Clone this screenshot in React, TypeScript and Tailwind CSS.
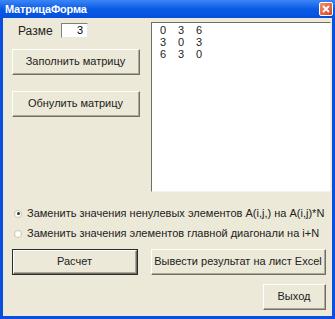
import React from "react";

const font = { fontFamily: '"Liberation Sans", Arial, sans-serif' };

function Btn({ label, w, def }: { label: string; w: string; def?: boolean }) {
  return (
    <div
      className={`${w} h-[26px] ${def ? "border border-[#2b2b2b]" : ""} flex`}
    >
      <div className="flex-1 flex border-t border-l border-t-white border-l-white border-r border-b border-r-[#716f64] border-b-[#716f64]">
        <div className="flex-1 flex items-center justify-center border-r border-b border-r-[#aca899] border-b-[#aca899] bg-[#ece9d8] text-[11px] text-[#222]">
          {label}
        </div>
      </div>
    </div>
  );
}

function Radio({ checked, label }: { checked?: boolean; label: string }) {
  return (
    <div className="flex items-center h-[13px] text-[11px] text-[#222]">
      <div className="w-[8px] h-[8px] rounded-full bg-white border border-[#c9c6b8] flex items-center justify-center ml-[11px] mr-[5px]">
        {checked && <div className="w-[3px] h-[3px] rounded-full bg-[#333]" />}
      </div>
      <span>{label}</span>
    </div>
  );
}

export default function App() {
  const rows = [
    ["0", "3", "6"],
    ["3", "0", "3"],
    ["6", "3", "0"],
  ];
  return (
    <div className="w-[335px] h-[319px] bg-[#0a4fe0] flex flex-col" style={font}>
      <div className="h-[18px] flex items-center justify-between bg-gradient-to-b from-[#3b86f5] via-[#0a5ae8] to-[#0550dc]">
        <span className="ml-[5px] text-[11px] font-bold text-white tracking-[-0.2px]">МатрицаФорма</span>
        <div className="w-[14px] h-[14px] mr-[2px] rounded-[2px] bg-gradient-to-br from-[#f0906c] to-[#d5431e] border border-white flex items-center justify-center">
          <svg width="8" height="8" viewBox="0 0 8 8">
            <path d="M1 1 L7 7 M7 1 L1 7" stroke="white" strokeWidth="1.8" />
          </svg>
        </div>
      </div>
      <div className="flex-1 mx-[3px] mb-[3px] bg-[#ece9d8] flex flex-col">
        <div className="flex mt-[4px]">
          <div className="flex flex-col ml-[9px] w-[128px]">
            <div className="flex items-center h-[15px] mt-[1px]">
              <span className="ml-[6px] text-[12px] text-[#222] w-[43px]">Разме</span>
              <div className="w-[27px] h-[15px] bg-white border-t border-l border-t-[#7f7f7f] border-l-[#7f7f7f] border-r border-b border-r-[#e8e8e8] border-b-[#e8e8e8] flex items-center justify-end pr-[4px] text-[11px]">
                3
              </div>
            </div>
            <div className="mt-[11px]">
              <Btn label="Заполнить матрицу" w="w-[128px]" />
            </div>
            <div className="mt-[16px]">
              <Btn label="Обнулить матрицу" w="w-[128px]" />
            </div>
          </div>
          <div className="ml-[11px] w-[180px] h-[170px] bg-white border-t border-l border-t-[#716f64] border-l-[#716f64] border-r border-b border-r-[#f3f2ec] border-b-[#f3f2ec] pl-[8px] pt-[1px]">
            {rows.map((r, i) => (
              <div key={i} className="flex text-[11px] leading-[12px] text-[#222]">
                {r.map((v, j) => (
                  <span key={j} className="w-[18px]">{v}</span>
                ))}
              </div>
            ))}
          </div>
        </div>
        <div className="mt-[15px] flex flex-col gap-[7px]">
          <Radio checked label="Заменить значения ненулевых элементов A(i,j,) на A(i,j)*N" />
          <Radio label="Заменить значения элементов главной диагонали на i+N" />
        </div>
        <div className="flex mt-[9px] ml-[9px]">
          <Btn label="Расчет" w="w-[126px]" def />
          <div className="ml-[13px]">
            <Btn label="Вывести результат на лист Excel" w="w-[175px]" />
          </div>
        </div>
        <div className="flex justify-end mt-[9px] mr-[6px]">
          <Btn label="Выход" w="w-[63px]" />
        </div>
      </div>
    </div>
  );
}
